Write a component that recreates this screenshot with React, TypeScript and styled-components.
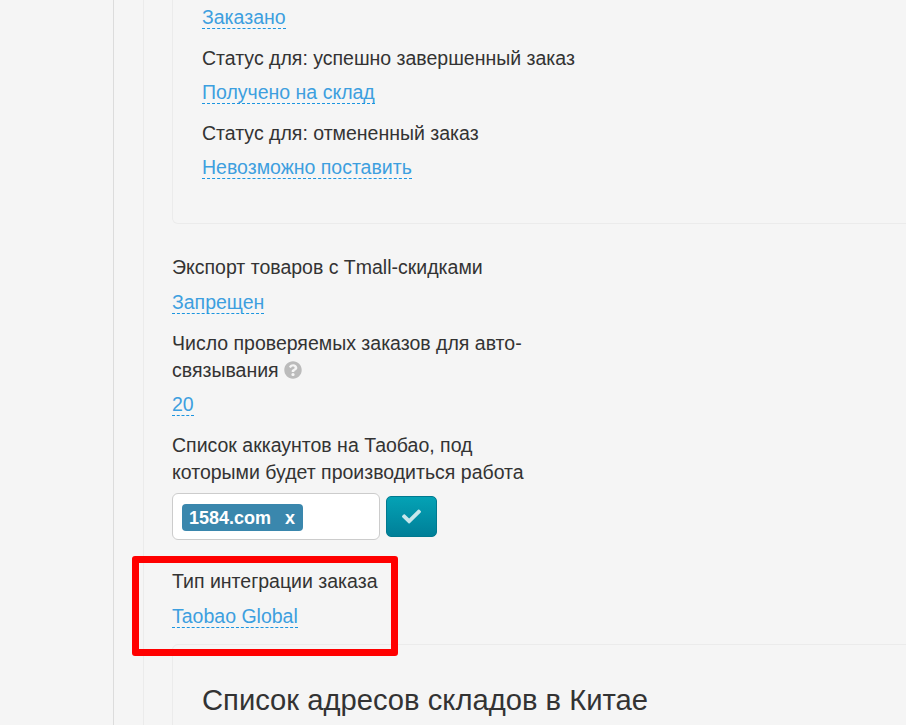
import React from "react";
import styled, { createGlobalStyle } from "styled-components";
import { FaCheck, FaQuestionCircle } from "react-icons/fa";

const Global = createGlobalStyle`
  html, body { margin: 0; padding: 0; background: #f5f5f5; overflow: hidden; }
  body { font-family: "Liberation Sans", Arial, sans-serif; font-size: 19.5px; color: #333; }
`;

const Page = styled.div`
  position: relative;
  width: 906px;
  height: 725px;
  overflow: hidden;
  padding-left: 113px;
  box-sizing: border-box;
`;
const OuterRail = styled.div`
  height: 100%;
  border-left: 1px solid #dcdcdc;
  padding-left: 29px;
`;
const InnerRail = styled.div`
  height: 100%;
  border-left: 1px solid #ebebeb;
  padding-left: 28px;
`;
const Card = styled.section`
  width: 900px;
  box-sizing: border-box;
  border: 1px solid #ebebeb;
  border-top: none;
  border-radius: 0 0 0 6px;
  padding: 4px 0 42px 29px;
  margin-bottom: 30px;
`;
const SecondCard = styled.section`
  width: 900px;
  height: 200px;
  box-sizing: border-box;
  border: 1px solid #ebebeb;
  border-radius: 6px 0 0 0;
  padding: 36px 0 0 29px;
  margin-top: 14px;
`;
const Heading = styled.h2`
  margin: 0;
  font-size: 29.2px;
  line-height: 38px;
  font-weight: 400;
  color: #333;
`;
const Label = styled.div<{ $narrow?: boolean }>`
  line-height: 27px;
  color: #333;
  margin-top: 14px;
  max-width: ${(p) => (p.$narrow ? "370px" : "none")};
`;
const ValueRow = styled.div`
  margin-top: 7px;
  height: 27px;
  line-height: 27px;
  &:first-child { margin-top: 0; }
`;
const LooseValueRow = styled(ValueRow)`
  margin-top: 8px;
`;
const ValueLink = styled.a`
  display: inline-block;
  height: 25px;
  line-height: 26px;
  color: #3d9fdf;
  border-bottom: 1px dashed #1b95e0;
  box-sizing: border-box;
`;
const HelpIcon = styled(FaQuestionCircle)`
  width: 18px;
  height: 18px;
  margin-left: 5px;
  vertical-align: -2px;
  color: #bbb;
`;
const TagForm = styled.div`
  display: flex;
  align-items: center;
  gap: 6px;
  margin-top: 7px;
  margin-bottom: 28px;
`;
const TagInput = styled.div`
  width: 208px;
  height: 47px;
  box-sizing: border-box;
  background: #fff;
  border: 1px solid #ccc;
  border-radius: 6px;
  padding: 10px 9px;
`;
const Tag = styled.span`
  display: inline-flex;
  align-items: center;
  justify-content: space-between;
  width: 121px;
  height: 27px;
  box-sizing: border-box;
  padding: 1px 8px 0 7px;
  border-radius: 4px;
  background: #3a87ad;
  color: #fff;
  font-size: 18px;
  font-weight: 700;
`;
const ConfirmButton = styled.button`
  display: flex;
  align-items: center;
  justify-content: center;
  width: 51px;
  height: 41px;
  padding: 0;
  border: 1px solid #00798f;
  border-radius: 5px;
  background: linear-gradient(#04a2b5, #007f98);
`;
const CheckIcon = styled(FaCheck)`
  width: 19px;
  height: 19px;
  color: rgba(255, 255, 255, 0.78);
`;
const Highlight = styled.div`
  position: absolute;
  left: 132px;
  top: 556px;
  width: 266px;
  height: 100px;
  box-sizing: border-box;
  border: 7px solid #ff0000;
  border-radius: 3px;
`;

export default function App() {
  return (
    <Page>
      <Global />
      <OuterRail>
        <InnerRail>
          <Card>
            <ValueRow><ValueLink>Заказано</ValueLink></ValueRow>
            <Label>Статус для: успешно завершенный заказ</Label>
            <ValueRow><ValueLink>Получено на склад</ValueLink></ValueRow>
            <Label>Статус для: отмененный заказ</Label>
            <ValueRow><ValueLink>Невозможно поставить</ValueLink></ValueRow>
          </Card>
          <Label>Экспорт товаров с Tmall-скидками</Label>
          <LooseValueRow><ValueLink>Запрещен</ValueLink></LooseValueRow>
          <Label $narrow>
            Число проверяемых заказов для авто-связывания
            <HelpIcon />
          </Label>
          <ValueRow><ValueLink>20</ValueLink></ValueRow>
          <Label $narrow>Список аккаунтов на Таобао, под которыми будет производиться работа</Label>
          <TagForm>
            <TagInput><Tag><span>1584.com</span><span>x</span></Tag></TagInput>
            <ConfirmButton aria-label="ok"><CheckIcon /></ConfirmButton>
          </TagForm>
          <Label>Тип интеграции заказа</Label>
          <LooseValueRow><ValueLink>Taobao Global</ValueLink></LooseValueRow>
          <SecondCard><Heading>Список адресов складов в Китае</Heading></SecondCard>
        </InnerRail>
      </OuterRail>
      <Highlight />
    </Page>
  );
}
